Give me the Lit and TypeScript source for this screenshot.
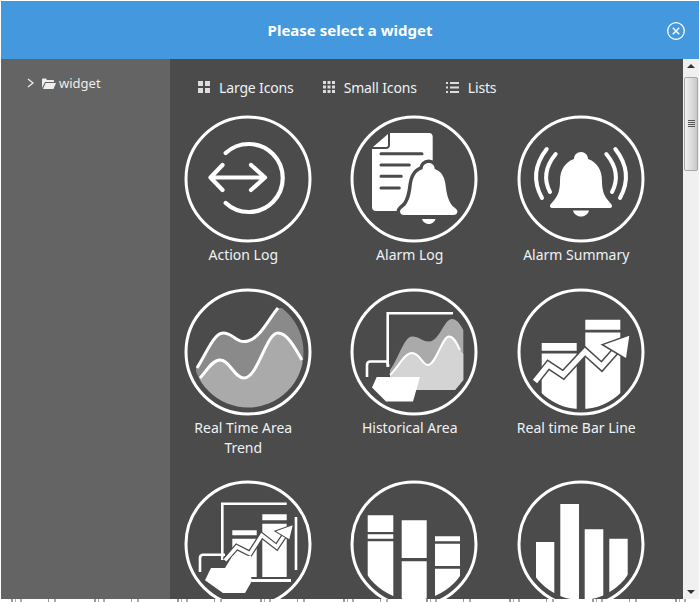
import { LitElement, html, css, svg } from "lit";
import { customElement } from "lit/decorators.js";

const ring = svg`<circle cx="64" cy="64" r="62" fill="none" stroke="#fff" stroke-width="3" />`;

const bell = svg`<path d="M64 37c-4 0-7 3-7 7c-9 3-14 11-14 22c0 9-2 14-5 18c-2 3-5 5-5 7c0 1.5 1 2 3 2h56c2 0 3-.5 3-2c0-2-3-4-5-7c-3-4-5-9-5-18c0-11-5-19-14-22c0-4-3-7-7-7z" fill="#fff" /><path d="M56 95.5h16c-1 4-5 6-8 6s-7-2-8-6z" fill="#fff" />`;

const trendLine = "M18 93.5L31.3 76.8L46.3 86.8L68 63.5L84.7 78.5L98 63.5";
const historyLine = "M41 80.3L52.7 67L66 73.7L77.7 55.3L92.7 67L102.7 52";

const icons: Record<string, unknown> = {
  action: svg`<g fill="none" stroke="#fff" stroke-linecap="round" stroke-linejoin="round" stroke-width="4.2">
    <path d="M41.7 38A34 34 0 1 1 41.7 88" />
    <path d="M27 62.5H81M38.5 50L26.5 62.5L38.5 75M67 50L81 62.5L67 75" />
  </g>`,
  alarmLog: svg`
    <path d="M40 18H79c2.5 0 3.7 1.5 3.7 3.7V96H26c-2.5 0-4-1.5-4-4V34h14c2.5 0 4-1.500 4-4z" fill="#fff" />
    <path d="M38 19V30c0 1.500-1 2-2 2H23z" fill="#fff" />
    <path d="M31 38.700H72M31 50H59.300M31 61.300H51.300M31 73H49.300" stroke="#4b4b4b" stroke-width="3" stroke-linecap="round" />
    <path d="M78.700 48c-3.500 0-6 2.500-6 6c-8 3-10 9-11 17c-1 9-3 15-6 19c-2 2.500-5.700 4-5.700 6.500c0 2.500 2 3.500 4 3.500h49.400c2 0 4-1 4-3.500c0-2.500-3.700-4-5.700-6.500c-3-4-5-10-6-19c-1-8-3-14-11-17c0-3.500-2.500-6-6-6z" fill="#fff" stroke="#4b4b4b" stroke-width="7" paint-order="stroke" />
    <path d="M72 104h13.500c-1 3.500-4 5-6.700 5s-5.800-1.500-6.800-5z" fill="#fff" />`,
  alarmSummary: svg`${bell}<g fill="none" stroke="#fff" stroke-width="4" stroke-linecap="round">
    <path d="M29.700 34Q11 58 25 83M38.700 39Q23 58 33 77M98.300 34Q117 58 103 83M89.300 39Q105 58 95 77" />
  </g>`,
  areaTrend: svg`<defs><clipPath id="c4"><circle cx="64" cy="64" r="55.5" /></clipPath></defs>
    <g clip-path="url(#c4)">
      <path d="M12 80C22 66 30 45 39 45C50 45 52 56 64 53C76 50 84 32 94 20L130 20V100H12Z" fill="#8a8a8a" />
      <path d="M16 90C22 84 28 72 36 72C46 72 50 90 60 90C74 90 82 45 94 45C104 45 112 62 118 72L130 130H0V100Z" fill="#aaa" />
    </g>
    <path d="M13 80C22 66 30 45 39 45C50 45 52 56 64 53C76 50 84 32 94 20" fill="none" stroke="#fff" stroke-width="3" />
    <path d="M16 90C22 84 28 72 36 72C46 72 50 90 60 90C74 90 82 45 94 45C104 45 112 62 118 72" fill="none" stroke="#fff" stroke-width="3" />`,
  historical: svg`
    <path d="M37.700 79V25.200H103" fill="none" stroke="#fff" stroke-width="2.600" />
    <path d="M40 82C48 72 54 48.500 62 48.500C70 48.500 72 54 80 53.500C90 52 94 31 102 31C107 31 110 36 113.300 42V92L105 102H40Z" fill="#aaa" />
    <path d="M40 87C48 80 54 65 62 65C70 65 72 77 78 77C86 77 92 48.500 99 48.500C104 48.500 107 56 110 62L113.300 66V92L105 102H40Z" fill="#d4d4d4" />
    <path d="M40 87C48 80 54 65 62 65C70 65 72 77 78 77C86 77 92 48.500 99 48.500C104 48.500 107 56 110 62" fill="none" stroke="#fff" stroke-width="2" />
    <path d="M17 89V77c0-2 1-3.500 3.500-3.500H37l1.500 5" fill="none" stroke="#fff" stroke-width="2.600" />
    <path d="M26.700 89H70L63 113.500H36L22 99.500Z" fill="#fff" />`,
  barLine: svg`<defs><clipPath id="c6"><circle cx="64" cy="64" r="57" /></clipPath></defs>
    <g clip-path="url(#c6)" fill="#fff">
      <path d="M24.700 55.100H59.700V62.800H24.700ZM24.700 65.500H59.700V130H24.700ZM68.300 31.800H103.300V41.800H68.300ZM68.300 44.500H103.300V130H68.300Z" />
    </g>
    <path d=${trendLine} fill="none" stroke="#4b4b4b" stroke-width="8.400" />
    <path d=${trendLine} fill="none" stroke="#fff" stroke-width="5.400" />
    <path d="M87 56.800L112.300 47.800L109 70Z" fill="#fff" stroke="#4b4b4b" stroke-width="3" paint-order="stroke" />`,
  barHistory: svg`
    <path d="M38.300 80V23.700H102.700M112 37V90" fill="none" stroke="#fff" stroke-width="2.600" />
    <path d="M48.300 50.300H72.700V55.300H48.300ZM48.300 58.700H72.700V97H48.300ZM78.300 34.300H102.700V40.300H78.300ZM78.300 43.700H102.700V97H78.300ZM67 99H107V102H67Z" fill="#fff" />
    <path d=${historyLine} fill="none" stroke="#4b4b4b" stroke-width="6" />
    <path d=${historyLine} fill="none" stroke="#fff" stroke-width="3.500" />
    <path d="M92 51.300L108.700 45.300L105.300 59.300Z" fill="#fff" stroke="#4b4b4b" stroke-width="2" paint-order="stroke" />
    <path d="M16 92V78c0-2 1-3.300 3.300-3.300H41" fill="none" stroke="#fff" stroke-width="2.600" />
    <path d="M27 88H41L48.300 76H67.300V102L61 113H39L21 100.300Z" fill="#fff" />`,
  bars: svg`<defs><clipPath id="c8"><circle cx="64" cy="64" r="56" /></clipPath></defs>
    <g clip-path="url(#c8)" fill="#fff">
      <path d="M17.700 35.300H43.300V52H17.700ZM17.700 54.300H43.300V58.700H17.700ZM17.700 61.300H43.300V130H17.700Z" />
      <path d="M51.700 40.300H76.700V78H51.700ZM51.700 81.300H76.700V130H51.700Z" />
      <path d="M85 56.300H110V61.300H85ZM85 63.700H110V86H85ZM85 88.700H110V130H85Z" />
    </g>`,
  columns: svg`<defs><clipPath id="c9"><circle cx="64" cy="64" r="56" /></clipPath></defs>
    <g clip-path="url(#c9)" fill="#fff">
      <path d="M19 62H37.300V130H19ZM43.300 24H62V130H43.300ZM67.700 49.300H86.300V130H67.700ZM92.300 58.700H110.700V130H92.300Z" />
    </g>`,
};

const widgets = [
  { name: "Action Log", icon: "action" },
  { name: "Alarm Log", icon: "alarmLog" },
  { name: "Alarm Summary", icon: "alarmSummary" },
  { name: "Real Time Area Trend", icon: "areaTrend" },
  { name: "Historical Area", icon: "historical" },
  { name: "Real time Bar Line", icon: "barLine" },
  // the last row is cut off by the dialog before its labels start
  { name: "", icon: "barHistory" },
  { name: "", icon: "bars" },
  { name: "", icon: "columns" },
];

@customElement("app-root")
export class AppRoot extends LitElement {
  static styles = css`
    :host {
      display: block;
      width: 700px;
      height: 602px;
      overflow: hidden;
      background: #fff;
      font-family: "Noto Sans", "Open Sans", sans-serif;
      box-sizing: border-box;
      padding: 1px 1px 0 1px;
    }
    .dialog {
      height: 598px;
      display: flex;
      flex-direction: column;
    }
    .header {
      flex: none;
      height: 58px;
      background: #4499de;
      color: #fff;
      display: flex;
      align-items: center;
      justify-content: center;
      position: relative;
      font-size: 15px;
      font-weight: 700;
    }
    .close {
      position: absolute;
      right: 13px;
      top: 20px;
      width: 20px;
      height: 20px;
    }
    .body {
      flex: 1;
      min-height: 0;
      display: flex;
    }
    .side {
      flex: none;
      width: 169px;
      background: #646464;
      color: #eee;
      font-size: 13px;
      padding: 15px 0 0 26px;
      box-sizing: border-box;
    }
    .tree {
      display: flex;
      align-items: center;
      height: 18px;
    }
    .tree svg {
      flex: none;
    }
    .chev {
      margin-right: 8px;
    }
    .folder {
      margin-right: 3px;
    }
    .main {
      flex: none;
      width: 513px;
      background: #4b4b4b;
      overflow: hidden;
      color: #eef2f5;
    }
    .views {
      display: flex;
      height: 56px;
      padding: 0 0 0 28px;
      align-items: flex-start;
      font-size: 14px;
      letter-spacing: -0.15px;
    }
    .view {
      display: flex;
      align-items: center;
      height: 20px;
      margin-top: 18px;
      margin-right: 29px;
      gap: 9px;
    }
    .grid {
      display: grid;
      grid-template-columns: repeat(3, 146.5px);
      column-gap: 20px;
      row-gap: 22.5px;
      font-size: 14px;
      line-height: 20px;
      text-align: center;
    }
    .card svg {
      display: block;
      width: 128px;
      height: 128px;
      margin: 0 auto 2px;
      position: relative;
      left: 4.3px;
    }
    .label {
      padding: 0 10px;
    }
    .scroll {
      flex: none;
      width: 16px;
      background: #f0f0f0;
      display: flex;
      flex-direction: column;
      align-items: center;
      justify-content: space-between;
      padding: 5px 0;
      box-sizing: border-box;
      position: relative;
    }
    .arrow-up,
    .arrow-down {
      width: 0;
      height: 0;
      border-left: 4px solid transparent;
      border-right: 4px solid transparent;
    }
    .arrow-up {
      border-bottom: 4px solid #333;
    }
    .arrow-down {
      border-top: 4px solid #333;
    }
    .thumb {
      position: absolute;
      left: 1px;
      top: 18px;
      width: 14px;
      height: 94px;
      box-sizing: border-box;
      border: 1px solid #a8a8a8;
      border-radius: 2px;
      background: linear-gradient(to right, #f2f2f2, #dcdcdc 55%, #c8c8c8);
      display: flex;
      align-items: center;
      justify-content: center;
    }
    .grip {
      width: 7px;
      height: 8px;
      background: repeating-linear-gradient(to bottom, #555 0 1px, transparent 1px 2px);
    }
    /* tops of an unreadable text line that the crop leaves at the bottom edge */
    .status {
      height: 3px;
      background: repeating-linear-gradient(
        to right,
        #fff 0 10px,
        #999 10px 12px,
        #fff 12px 14px,
        #aaa 14px 15px,
        #fff 15px 19px,
        #aaa 19px 21px,
        #fff 21px 47px,
        #999 47px 48px,
        #fff 48px 53px,
        #aaa 53px 55px,
        #fff 55px 83px
      );
    }
  `;

  render() {
    return html`
      <div class="dialog">
        <div class="header">
          Please select a widget
          <svg class="close" viewBox="0 0 20 20" fill="none" stroke="#fff">
            <circle cx="10" cy="10" r="8.300" stroke-width="1.300" />
            <path d="M6.800 6.800L13.200 13.200M13.200 6.800L6.800 13.200" stroke-width="1.500" />
          </svg>
        </div>
        <div class="body">
          <div class="side">
            <div class="tree">
              <svg class="chev" width="7" height="10" viewBox="0 0 7 10" fill="none" stroke="#eee" stroke-width="1.300">
                <path d="M1 1L6 5L1 9" />
              </svg>
              <svg class="folder" width="14" height="11" viewBox="0 0 14 11" fill="#eee">
                <path d="M0 10V1.500C0 .8.500.5 1 .5H4L5 2H11C11.500 2 12 2.300 12 3V4H3L0 10Z" />
                <path d="M1 11L3.600 5H14L11.500 11Z" />
              </svg>
              widget
            </div>
          </div>
          <div class="main">
            <div class="views">
              <div class="view">
                <svg width="12" height="12" viewBox="0 0 12 12" fill="#ddd">
                  <path d="M0 0H5V5H0ZM7 0H12V5H7ZM0 7H5V12H0ZM7 7H12V12H7Z" />
                </svg>
                Large Icons
              </div>
              <div class="view">
                <svg width="12" height="12" viewBox="0 0 12 12" fill="#ddd">
                  <path d="M0 0H3V3H0ZM4.500 0H7.500V3H4.500ZM9 0H12V3H9ZM0 4.500H3V7.500H0ZM4.500 4.500H7.500V7.500H4.500ZM9 4.500H12V7.500H9ZM0 9H3V12H0ZM4.500 9H7.500V12H4.500ZM9 9H12V12H9Z" />
                </svg>
                Small Icons
              </div>
              <div class="view">
                <svg width="13" height="11" viewBox="0 0 13 11" fill="#ddd">
                  <path d="M0 0H2V2H0ZM4 0H13V2H4ZM0 4.500H2V6.500H0ZM4 4.500H13V6.500H4ZM0 9H2V11H0ZM4 9H13V11H4Z" />
                </svg>
                Lists
              </div>
            </div>
            <div class="grid">
              ${widgets.map(
                (w) => html`
                  <div class="card">
                    <svg viewBox="0 0 128 128">${ring}${icons[w.icon]}</svg>
                    ${w.name ? html`<div class="label">${w.name}</div>` : ""}
                  </div>
                `
              )}
            </div>
          </div>
          <div class="scroll">
            <div class="arrow-up"></div>
            <div class="thumb"><div class="grip"></div></div>
            <div class="arrow-down"></div>
          </div>
        </div>
      </div>
      <div class="status"></div>
    `;
  }
}
